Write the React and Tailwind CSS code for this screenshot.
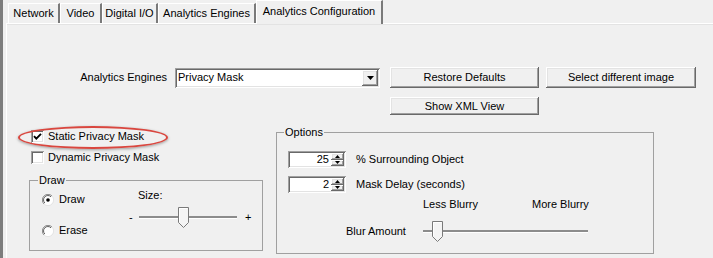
import React from "react";

const raised =
  "bg-[#f0f0f0] shadow-[inset_-1px_-1px_0_#696969,inset_1px_1px_0_#ffffff,inset_-2px_-2px_0_#a0a0a0,inset_2px_2px_0_#e3e3e3]";
const sunken =
  "bg-white shadow-[inset_1px_1px_0_#a0a0a0,inset_-1px_-1px_0_#ffffff,inset_2px_2px_0_#696969,inset_-2px_-2px_0_#e3e3e3]";

function Tab({ label, w, active }) {
  if (active) {
    return (
      <div
        className={`${w} relative z-10 -mb-px h-[24px] flex items-center justify-center pb-[2px] bg-[#f0f0f0] border-t border-l border-white border-r-2 border-r-[#7a7a7a]`}
      >
        {label}
      </div>
    );
  }
  return (
    <div
      className={`${w} h-[20px] flex items-center justify-center bg-[#f0f0f0] border-t border-l border-white border-r-2 border-r-[#7a7a7a]`}
    >
      {label}
    </div>
  );
}

function Button({ children, className }) {
  return (
    <div className={`${raised} ${className} flex items-center justify-center`}>
      {children}
    </div>
  );
}

function Checkbox({ checked }) {
  return (
    <div className={`${sunken} w-[13px] h-[13px] shrink-0 flex items-center justify-center`}>
      {checked && (
        <svg width="13" height="13" viewBox="0 0 13 13">
          <path d="M3 6.2 L5.3 8.6 L10 3.8" fill="none" stroke="#000" strokeWidth="1.9" />
        </svg>
      )}
    </div>
  );
}

function Radio({ checked }) {
  return (
    <svg width="12" height="12" viewBox="0 0 12 12" className="shrink-0">
      <circle cx="6" cy="6" r="5.5" fill="#fff" />
      <path d="M10 2 A5.5 5.5 0 0 0 2 10" fill="none" stroke="#8a8a8a" strokeWidth="1" />
      <path d="M2 10 A5.5 5.5 0 0 0 10 2" fill="none" stroke="#e3e3e3" strokeWidth="1" />
      <path d="M9 2.8 A4.3 4.3 0 0 0 2.8 9" fill="none" stroke="#5a5a5a" strokeWidth="1" />
      {checked && <circle cx="6" cy="6" r="1.8" fill="#000" />}
    </svg>
  );
}

function Thumb({ className }) {
  return (
    <svg width="11" height="21" viewBox="0 0 11 21" className={`absolute top-0 ${className}`}>
      <path d="M0.5 0.5 H10.5 V15.5 L5.5 20.5 L0.5 15.5 Z" fill="#f4f4f4" stroke="#7a7a7a" />
      <path d="M1.5 15 V1.5 H9.5" fill="none" stroke="#ffffff" />
    </svg>
  );
}

function Slider({ width, thumb }) {
  return (
    <div className={`relative ${width} h-[21px] flex items-center`}>
      <div className="w-full h-[3px] bg-[#8c8c8c] border-b border-white" />
      <Thumb className={thumb} />
    </div>
  );
}

function Spinner({ value }) {
  return (
    <div className={`${sunken} w-[58px] h-[17px] flex`}>
      <div className="flex-1 text-right pr-[2px] leading-[17px]">{value}</div>
      <div className="w-[15px] flex flex-col py-[2px] pr-[2px]">
        <div className={`${raised} flex-1 flex items-center justify-center`}>
          <svg width="5" height="3" viewBox="0 0 5 3">
            <path d="M0 3 L2.5 0 L5 3 Z" fill="#000" />
          </svg>
        </div>
        <div className={`${raised} flex-1 flex items-center justify-center`}>
          <svg width="5" height="3" viewBox="0 0 5 3">
            <path d="M0 0 L2.5 3 L5 0 Z" fill="#000" />
          </svg>
        </div>
      </div>
    </div>
  );
}

export default function App() {
  return (
    <div className="w-[713px] h-[258px] overflow-hidden bg-[#f0f0f0] border-l-[3px] border-[#7d7d7d] flex flex-col font-['Liberation_Sans',Arial,sans-serif] text-[11px] text-black leading-[13px]">
      {/* Tabs */}
      <div className="h-[23px] flex items-end pl-[5px] shrink-0">
        <Tab label="Network" w="w-[52px]" />
        <Tab label="Video" w="w-[42px]" />
        <Tab label="Digital I/O" w="w-[56px]" />
        <Tab label="Analytics Engines" w="w-[98px]" />
        <Tab label="Analytics Configuration" w="w-[127px]" active />
      </div>

      {/* Panel */}
      <div className="flex-1 ml-[3px] border-t border-l border-white shadow-[0_1px_0_#e3e3e3_inset]">
        {/* Engine row */}
        <div className="mt-[43px] h-[21px] flex items-center">
          <div className="w-[160px] text-right">Analytics Engines</div>
          <div className={`${sunken} ml-[8px] w-[205px] h-[20px] flex items-center pl-[3px] pr-[2px]`}>
            <div className="flex-1">Privacy Mask</div>
            <div className={`${raised} w-[16px] h-[16px] flex items-center justify-center`}>
              <svg width="7" height="4" viewBox="0 0 7 4">
                <path d="M0 0 H7 L3.5 4 Z" fill="#000" />
              </svg>
            </div>
          </div>
          <Button className="ml-[10px] w-[149px] h-[21px]">Restore Defaults</Button>
          <Button className="ml-[7px] w-[150px] h-[21px]">Select different image</Button>
        </div>
        <div className="mt-[9px] flex">
          <Button className="ml-[383px] w-[149px] h-[18px]">Show XML View</Button>
        </div>

        {/* Lower section */}
        <div className="mt-[11px] flex items-start">
          <div className="ml-[22px] w-[234px] pt-[4px] flex flex-col">
            <div className="relative pl-[2px] h-[13px] flex items-center">
              <div className="absolute -left-[11px] -top-[4px] w-[150px] h-[23px] rounded-[50%] border-[2.5px] border-[#d9473f] shadow-[0_1px_3px_rgba(0,0,0,0.35)]" />
              <Checkbox checked />
              <span className="ml-[4px]">Static Privacy Mask</span>
            </div>
            <div className="mt-[8px] pl-[2px] h-[13px] flex items-center">
              <Checkbox />
              <span className="ml-[4px]">Dynamic Privacy Mask</span>
            </div>
            <fieldset className="mt-[10px] w-[234px] h-[77px] border border-[#a0a0a0]">
              <legend className="ml-[8px] px-[1px] leading-[13px]">Draw</legend>
              <div className="flex">
                <div className="w-[99px] pl-[12px] flex flex-col">
                  <div className="mt-[6px] h-[13px] flex items-center">
                    <Radio checked />
                    <span className="ml-[5px]">Draw</span>
                  </div>
                  <div className="mt-[18px] h-[13px] flex items-center">
                    <Radio />
                    <span className="ml-[5px]">Erase</span>
                  </div>
                </div>
                <div className="flex flex-col">
                  <div className="mt-[2px] pl-[9px] h-[13px]">Size:</div>
                  <div className="mt-[5px] h-[21px] flex items-center">
                    <span className="w-[10px]">-</span>
                    <Slider width="w-[98px]" thumb="left-[39px]" />
                    <span className="ml-[8px]">+</span>
                  </div>
                </div>
              </div>
            </fieldset>
          </div>

          <fieldset className="ml-[13px] w-[378px] h-[128px] border border-[#a0a0a0]">
            <legend className="ml-[7px] px-[1px] leading-[13px]">Options</legend>
            <div className="pl-[11px] flex flex-col">
              <div className="mt-[12px] h-[17px] flex items-center">
                <Spinner value="25" />
                <span className="ml-[10px]">% Surrounding Object</span>
              </div>
              <div className="mt-[8px] h-[17px] flex items-center">
                <Spinner value="2" />
                <span className="ml-[10px]">Mask Delay (seconds)</span>
              </div>
              <div className="mt-[5px] h-[13px] flex">
                <span className="ml-[135px] w-[109px]">Less Blurry</span>
                <span>More Blurry</span>
              </div>
              <div className="mt-[10px] h-[21px] flex items-center">
                <span className="ml-[58px] w-[77px]">Blur Amount</span>
                <Slider width="w-[165px]" thumb="left-[9px]" />
              </div>
            </div>
          </fieldset>
        </div>
      </div>
    </div>
  );
}
